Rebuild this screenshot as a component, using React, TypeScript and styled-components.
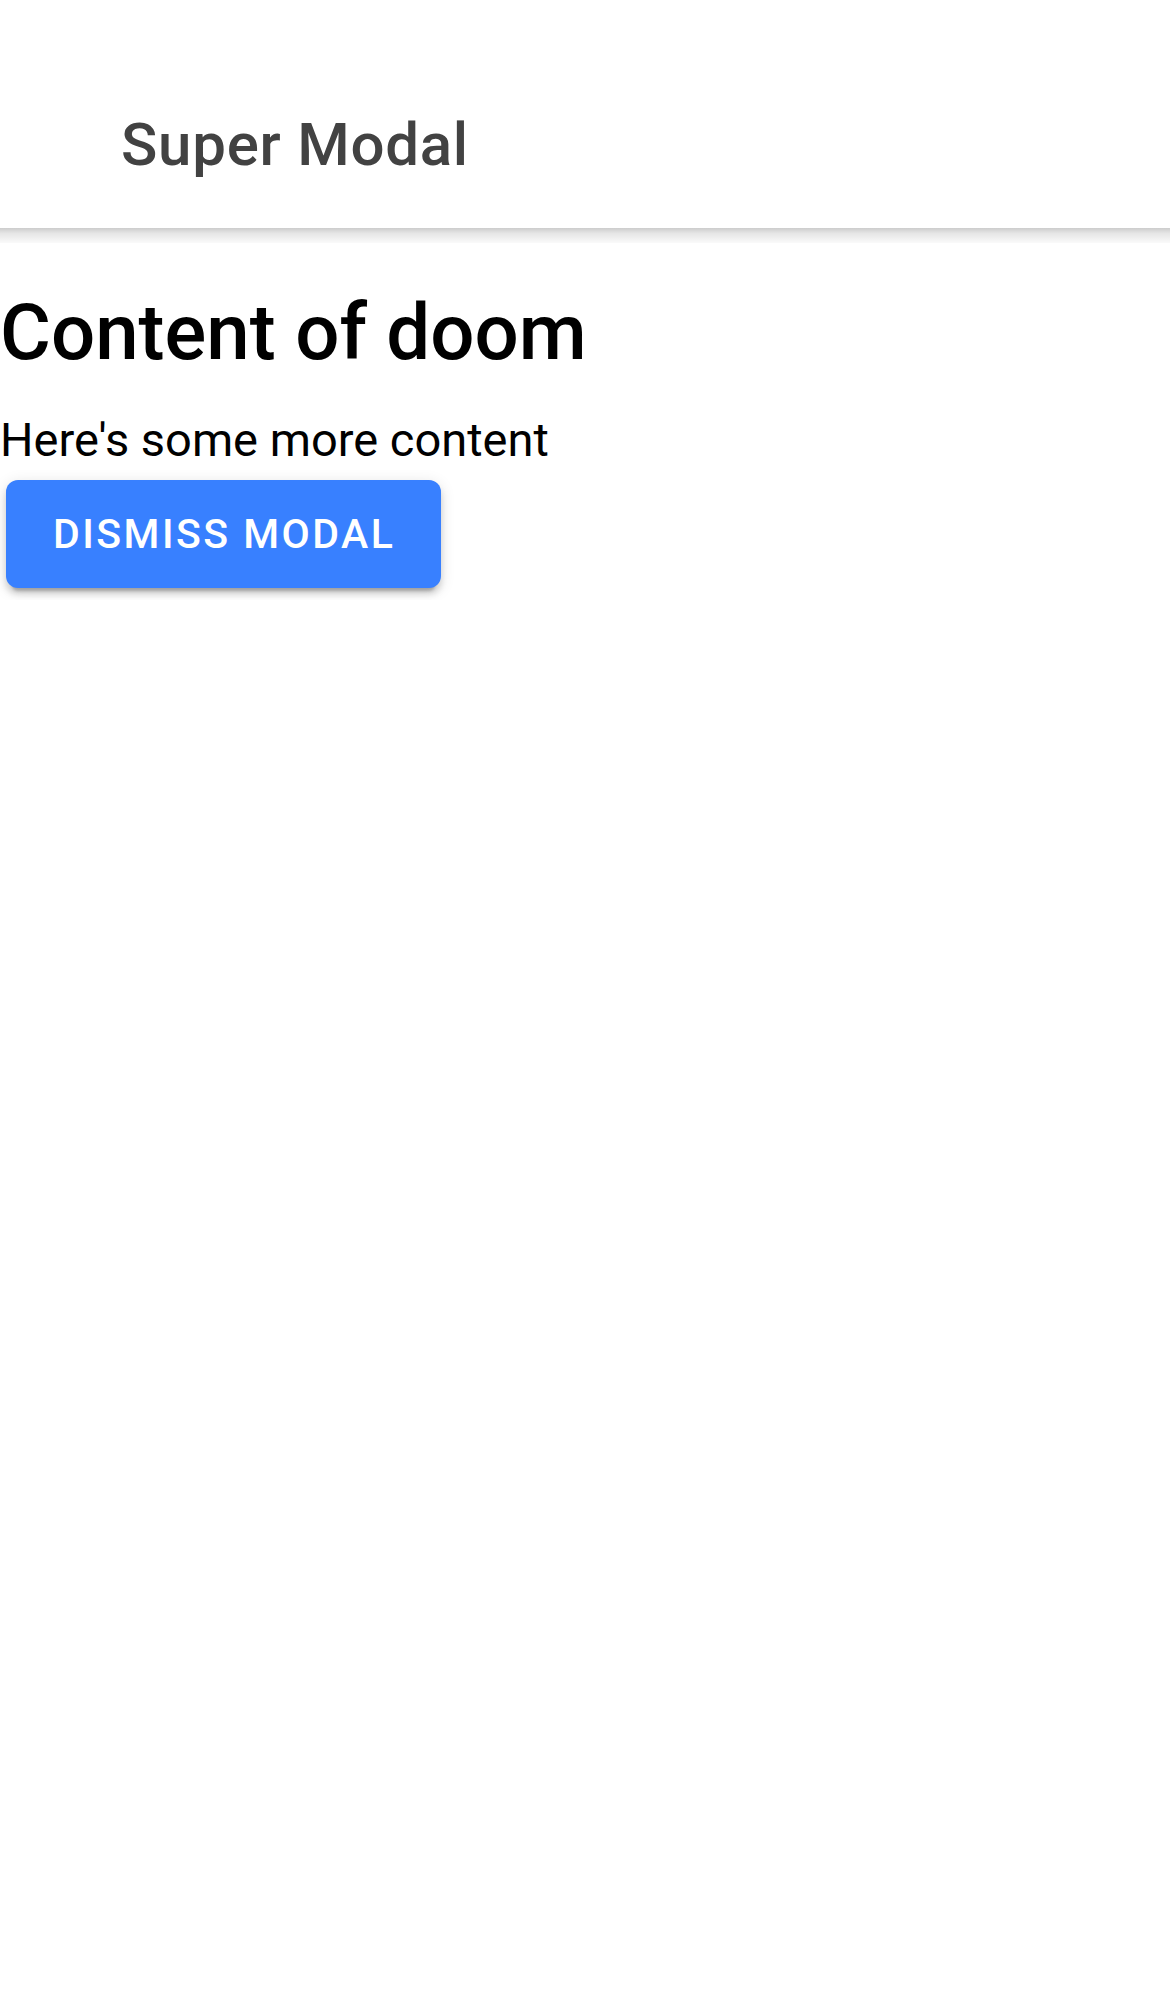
import React from "react";
import styled, { createGlobalStyle } from "styled-components";

const Global = createGlobalStyle`
  html, body { margin: 0; padding: 0; background: #ffffff; }
  body { font-family: Roboto, "Noto Sans", "Liberation Sans", sans-serif; color: #000; }
`;

const Header = styled.header`
  position: relative;
  z-index: 1;
  padding-top: 60px;
  background: #ffffff;

  &::after {
    content: "";
    position: absolute;
    left: 0;
    right: 0;
    top: 100%;
    height: 15px;
    background: linear-gradient(to bottom, rgba(0, 0, 0, 0.2), rgba(0, 0, 0, 0.1) 35%, rgba(0, 0, 0, 0.02));
  }
`;

const Toolbar = styled.div`
  height: 168px;
  display: flex;
  align-items: center;
  padding-left: 121px;
`;

const Title = styled.h2`
  margin: 0;
  font-size: 60px;
  font-weight: 500;
  letter-spacing: 0.0125em;
  line-height: normal;
  color: #424242;
`;

const Content = styled.main`
  padding: 0;
`;

const Heading = styled.h1`
  margin: 58px 0 32px 0;
  font-size: 78px;
  font-weight: 500;
  line-height: 1.2;
`;

const Para = styled.p`
  margin: 0;
  font-size: 47px;
  line-height: 56px;
`;

const Button = styled.button`
  margin: 12px 6px;
  height: 108px;
  padding: 0 46px 0 47px;
  border: none;
  border-radius: 12px;
  background: #3880ff;
  color: #ffffff;
  font-family: Roboto, "Noto Sans", "Liberation Sans", sans-serif;
  font-size: 41px;
  font-weight: 500;
  letter-spacing: 0.06em;
  text-transform: uppercase;
  box-shadow: 0 9px 3px -6px rgba(0, 0, 0, 0.2), 0 6px 6px 0 rgba(0, 0, 0, 0.14), 0 3px 15px 0 rgba(0, 0, 0, 0.12);
`;

export default function App() {
  return (
    <>
      <Global />
      <Header>
        <Toolbar>
          <Title>Super Modal</Title>
        </Toolbar>
      </Header>
      <Content>
        <Heading>Content of doom</Heading>
        <Para>Here's some more content</Para>
        <Button>Dismiss Modal</Button>
      </Content>
    </>
  );
}
